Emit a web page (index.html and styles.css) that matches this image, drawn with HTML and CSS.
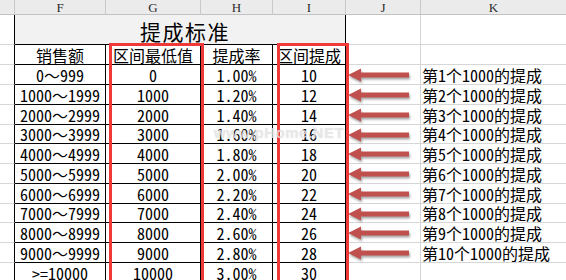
FILE: index.html
```html
<!DOCTYPE html>
<html lang="zh-CN">
<head>
<meta charset="utf-8">
<title>提成标准</title>
<link rel="stylesheet" href="styles.css">
</head>
<body>
<div class="sheet">
  <div class="grid">
    <div class="hd"></div><div class="hd">F</div><div class="hd">G</div><div class="hd">H</div><div class="hd">I</div><div class="hd">J</div><div class="hd">K</div>

    <div class="c e"></div><div class="c title">提成标准</div><div class="c j"></div><div class="c k"></div>

    <div class="c e"></div><div class="c t">销售额</div><div class="c t">区间最低值</div><div class="c t">提成率</div><div class="c t">区间提成</div><div class="c j"></div><div class="c k"></div>

    <div class="c e"></div><div class="c t">0～999</div><div class="c t">0</div><div class="c t">1.00%</div><div class="c t">10</div><div class="c j"><svg class="arrow" viewBox="0 0 66 19" width="66" height="19"><path d="M1 10 L14 3.5 L14 7.5 L62 7.5 L62 12.5 L14 12.5 L14 16.5 Z"/></svg></div><div class="c k">第1个1000的提成</div>
    <div class="c e"></div><div class="c t">1000～1999</div><div class="c t">1000</div><div class="c t">1.20%</div><div class="c t">12</div><div class="c j"><svg class="arrow" viewBox="0 0 66 19" width="66" height="19"><path d="M1 10 L14 3.5 L14 7.5 L62 7.5 L62 12.5 L14 12.5 L14 16.5 Z"/></svg></div><div class="c k">第2个1000的提成</div>
    <div class="c e"></div><div class="c t">2000～2999</div><div class="c t">2000</div><div class="c t">1.40%</div><div class="c t">14</div><div class="c j"><svg class="arrow" viewBox="0 0 66 19" width="66" height="19"><path d="M1 10 L14 3.5 L14 7.5 L62 7.5 L62 12.5 L14 12.5 L14 16.5 Z"/></svg></div><div class="c k">第3个1000的提成</div>
    <div class="c e"></div><div class="c t">3000～3999</div><div class="c t">3000</div><div class="c t">1.60%</div><div class="c t">16</div><div class="c j"><svg class="arrow" viewBox="0 0 66 19" width="66" height="19"><path d="M1 10 L14 3.5 L14 7.5 L62 7.5 L62 12.5 L14 12.5 L14 16.5 Z"/></svg></div><div class="c k">第4个1000的提成</div>
    <div class="c e"></div><div class="c t">4000～4999</div><div class="c t">4000</div><div class="c t">1.80%</div><div class="c t">18</div><div class="c j"><svg class="arrow" viewBox="0 0 66 19" width="66" height="19"><path d="M1 10 L14 3.5 L14 7.5 L62 7.5 L62 12.5 L14 12.5 L14 16.5 Z"/></svg></div><div class="c k">第5个1000的提成</div>
    <div class="c e"></div><div class="c t">5000～5999</div><div class="c t">5000</div><div class="c t">2.00%</div><div class="c t">20</div><div class="c j"><svg class="arrow" viewBox="0 0 66 19" width="66" height="19"><path d="M1 10 L14 3.5 L14 7.5 L62 7.5 L62 12.5 L14 12.5 L14 16.5 Z"/></svg></div><div class="c k">第6个1000的提成</div>
    <div class="c e"></div><div class="c t">6000～6999</div><div class="c t">6000</div><div class="c t">2.20%</div><div class="c t">22</div><div class="c j"><svg class="arrow" viewBox="0 0 66 19" width="66" height="19"><path d="M1 10 L14 3.5 L14 7.5 L62 7.5 L62 12.5 L14 12.5 L14 16.5 Z"/></svg></div><div class="c k">第7个1000的提成</div>
    <div class="c e"></div><div class="c t">7000～7999</div><div class="c t">7000</div><div class="c t">2.40%</div><div class="c t">24</div><div class="c j"><svg class="arrow" viewBox="0 0 66 19" width="66" height="19"><path d="M1 10 L14 3.5 L14 7.5 L62 7.5 L62 12.5 L14 12.5 L14 16.5 Z"/></svg></div><div class="c k">第8个1000的提成</div>
    <div class="c e"></div><div class="c t">8000～8999</div><div class="c t">8000</div><div class="c t">2.60%</div><div class="c t">26</div><div class="c j"><svg class="arrow" viewBox="0 0 66 19" width="66" height="19"><path d="M1 10 L14 3.5 L14 7.5 L62 7.5 L62 12.5 L14 12.5 L14 16.5 Z"/></svg></div><div class="c k">第9个1000的提成</div>
    <div class="c e"></div><div class="c t">9000～9999</div><div class="c t">9000</div><div class="c t">2.80%</div><div class="c t">28</div><div class="c j"><svg class="arrow" viewBox="0 0 66 19" width="66" height="19"><path d="M1 10 L14 3.5 L14 7.5 L62 7.5 L62 12.5 L14 12.5 L14 16.5 Z"/></svg></div><div class="c k">第10个1000的提成</div>
    <div class="c e"></div><div class="c t">&gt;=10000</div><div class="c t">10000</div><div class="c t">3.00%</div><div class="c t">30</div><div class="c j"></div><div class="c k"></div>
  </div>
  <div class="redbox box-g"></div>
  <div class="redbox box-i"></div>
  <div class="watermark">www.pHome.NET</div>
</div>
</body>
</html>
```

FILE: styles.css
```css
html, body {
  margin: 0;
  padding: 0;
  background: #ffffff;
}

.sheet {
  position: relative;
  width: 566px;
  height: 280px;
  overflow: hidden;
}

.grid {
  display: grid;
  grid-template-columns: 15px 91px 95px 72px 73px 75px 146px;
  grid-template-rows: 15px 30px 20px 20px 20px 20px 19px 20px 20px 20px 19px 20px 20px 20px;
  font-family: "Noto Sans Mono CJK SC", "Noto Sans CJK SC", sans-serif;
  font-size: 16px;
  line-height: 18px;
  color: #000;
}

.hd {
  background: #ebebeb;
  border-right: 1px solid #c9c9c9;
  border-bottom: 1px solid #c2c2c2;
  display: flex;
  align-items: flex-end;
  justify-content: center;
  font-family: "Liberation Serif", serif;
  font-size: 13px;
  line-height: 13px;
  color: #2a2a2a;
}

.c {
  border-right: 1px solid #d6d6d6;
  border-bottom: 1px solid #d6d6d6;
  display: flex;
  align-items: center;
  justify-content: center;
  white-space: nowrap;
  overflow: visible;
}

.e {
  border-right-color: #000;
}

.t {
  border-right-color: #000;
  border-bottom-color: #000;
}

.title {
  grid-column: span 4;
  background: #f2f2f2;
  border-right-color: #000;
  border-bottom-color: #000;
  font-family: "Noto Sans CJK SC", sans-serif;
  font-size: 21px;
  letter-spacing: 1.5px;
  padding-left: 10px;
  padding-top: 3px;
}

.j {
  justify-content: flex-start;
  padding-left: 1px;
}

.k {
  justify-content: flex-start;
  padding-left: 1px;
}

.arrow {
  display: block;
  fill: #c0504d;
  filter: drop-shadow(1px 2px 1.2px rgba(0, 0, 0, 0.35));
}

.redbox {
  position: absolute;
  top: 43px;
  height: 300px;
  border: 3px solid #f03a3a;
  box-sizing: border-box;
}

.box-g {
  left: 109px;
  width: 95px;
}

.box-i {
  left: 277px;
  width: 72px;
}

.watermark {
  position: absolute;
  left: 214px;
  top: 124px;
  font-family: "Liberation Sans", sans-serif;
  font-weight: bold;
  font-size: 15px;
  letter-spacing: 0.5px;
  color: rgba(235, 235, 235, 0.7);
  text-shadow: 0 0 1px rgba(190, 190, 190, 0.5);
}
```
